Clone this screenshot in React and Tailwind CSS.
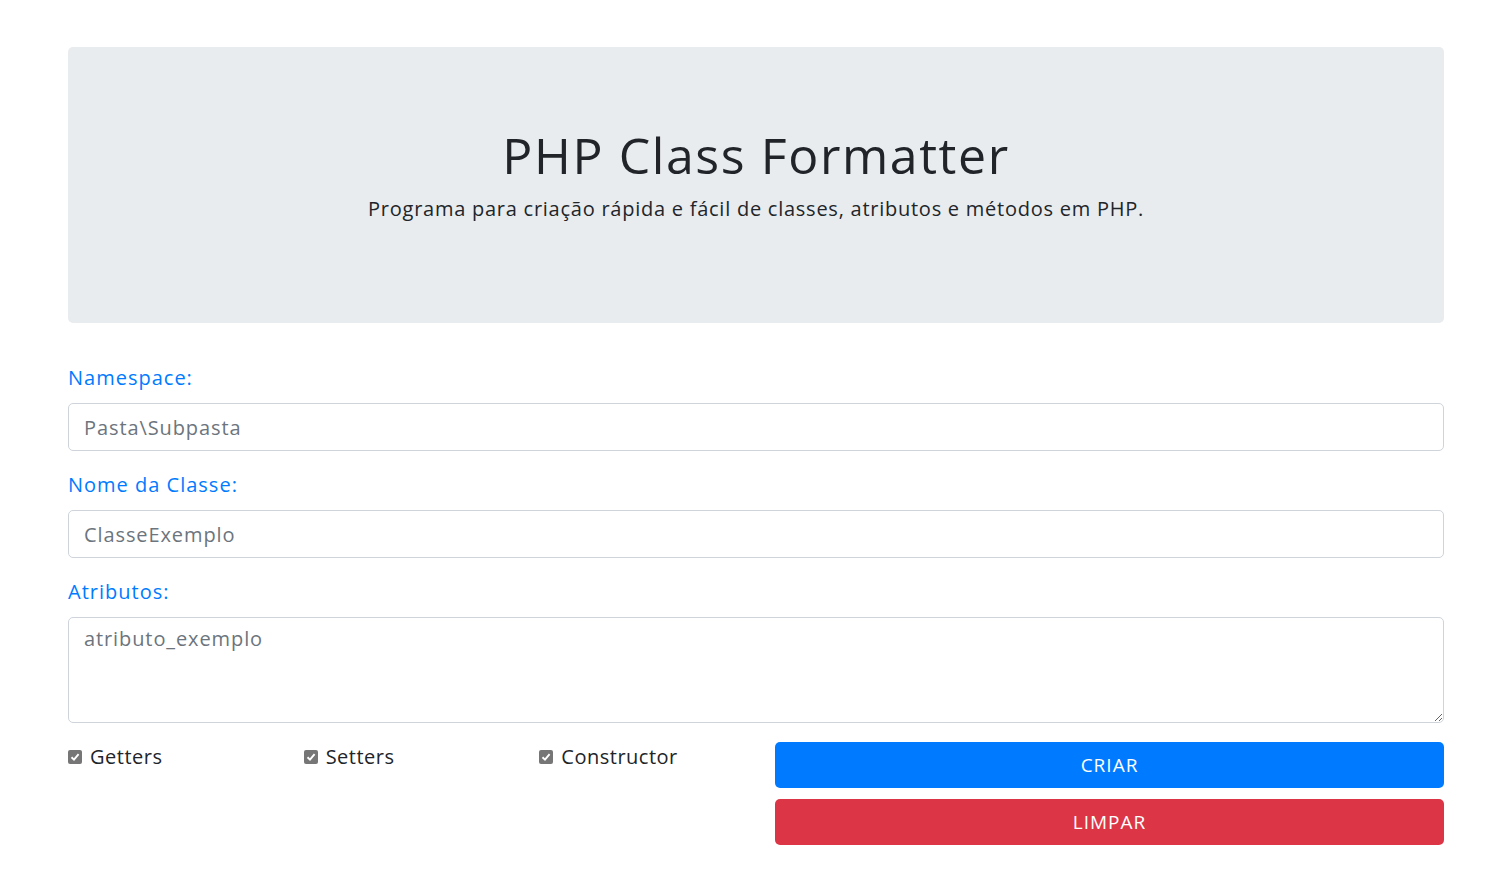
import React from "react";

const font = { fontFamily: '"Open Sans", "DejaVu Sans", sans-serif' };

const Check = ({ label }) => (
  <label className="flex items-center gap-[8px] h-[30px] text-[20px] tracking-[0.5px] text-[#212529]">
    <span className="w-[14px] h-[14px] rounded-[2px] bg-[#767676] flex items-center justify-center">
      <svg width="10" height="10" viewBox="0 0 10 10">
        <path d="M1.5 5.2 L4 7.6 L8.6 2.2" stroke="white" strokeWidth="1.9" fill="none" />
      </svg>
    </span>
    {label}
  </label>
);

const inputCls =
  "w-full border border-[#ced4da] rounded-[5px] px-[15px] text-[20px] tracking-[0.9px] text-[#495057] placeholder-[#6c757d] outline-none";

const Label = ({ children }) => (
  <label className="block h-[30px] leading-[30px] text-[20px] tracking-[1px] text-[#007bff] mb-[10px]">{children}</label>
);

export default function App() {
  return (
    <div className="min-h-screen bg-white pl-[68px] pr-[67px] pt-[47px]" style={font}>
      {/* Header */}
      <div className="h-[276px] bg-[#e9ecef] rounded-[5px] flex flex-col items-center pt-[77px] text-[#212529]">
        <h1 className="text-[50px] leading-[62px] font-normal tracking-[1.6px] mb-[8px]">PHP Class Formatter</h1>
        <p className="text-[20px] leading-[30px] font-normal tracking-[0.75px]">
          Programa para criação rápida e fácil de classes, atributos e métodos em PHP.
        </p>
      </div>

      <div className="mt-[40px]">
        <div className="mb-[19px]">
          <Label>Namespace:</Label>
          <input className={inputCls + " h-[48px]"} placeholder="Pasta\Subpasta" />
        </div>
        <div className="mb-[19px]">
          <Label>Nome da Classe:</Label>
          <input className={inputCls + " h-[48px]"} placeholder="ClasseExemplo" />
        </div>
        <div>
          <Label>Atributos:</Label>
          <textarea
            className={inputCls + " block h-[106px] py-[6px] leading-[30px]"}
            placeholder="atributo_exemplo"
          />
        </div>

        <div className="grid grid-cols-[707px_1fr] mt-[19px]">
          <div className="grid grid-cols-3 items-start">
            <Check label="Getters" />
            <Check label="Setters" />
            <Check label="Constructor" />
          </div>
          <div className="flex flex-col gap-[11px]">
            <button className="h-[46px] rounded-[5px] bg-[#007bff] text-white text-[19px] tracking-[1px]">CRIAR</button>
            <button className="h-[46px] rounded-[5px] bg-[#dc3545] text-white text-[19px] tracking-[1px]">LIMPAR</button>
          </div>
        </div>
      </div>
    </div>
  );
}
